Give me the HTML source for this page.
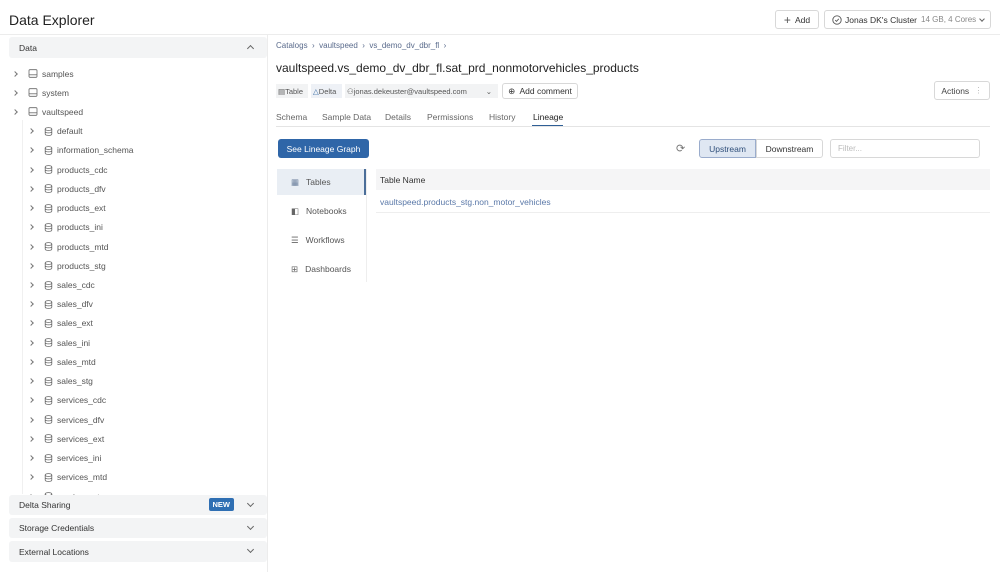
<!DOCTYPE html>
<html><head><meta charset="utf-8"><style>
*{box-sizing:border-box;margin:0;padding:0}
body{width:1000px;height:572px;overflow:hidden;background:#fff;font-family:"Liberation Sans",sans-serif;color:#333;font-size:8.5px;position:relative}
.abs{position:absolute}
.btn{position:absolute;border:1px solid #d8d8d8;border-radius:3px;background:#fff;font-size:8.5px;color:#333;display:flex;align-items:center;justify-content:center}
.row{position:absolute;height:19px;display:flex;align-items:center;font-size:8.5px;color:#555}
.chev{width:4px;height:4px;border-right:1px solid #777;border-bottom:1px solid #777;transform:rotate(-45deg);display:inline-block}
.sec{position:absolute;left:9px;width:258px;background:#f3f4f5;border-radius:3px;font-size:8.5px;color:#333;padding-left:10px;display:flex;align-items:center}
.dn{position:absolute;right:14px;width:5px;height:5px;border-right:1px solid #666;border-bottom:1px solid #666;transform:rotate(45deg)}
.tab{position:absolute;top:112px;font-size:8.5px;color:#666}
.side{position:absolute;left:277px;width:89px;height:26px;display:flex;align-items:center;padding-left:14px;font-size:8.5px;color:#555}
</style></head><body>
<div class="abs" style="left:9px;top:12px;font-size:14px;color:#222">Data Explorer</div>
<div class="abs" style="left:0;top:34px;width:1000px;border-top:1px solid #ececec"></div>
<div class="btn" style="left:775px;top:10px;width:44px;height:19px"><span style="font-size:12px;margin-right:4px;color:#555">+</span>Add</div>
<div class="btn" style="left:824px;top:10px;width:167px;height:19px;justify-content:flex-start;padding-left:7px"><svg width="10" height="10" viewBox="0 0 10 10"><circle cx="5" cy="5" r="4.2" fill="none" stroke="#555" stroke-width="0.9"/><path d="M3.2 5.1l1.3 1.3 2.3-2.6" fill="none" stroke="#555" stroke-width="0.9"/></svg><span style="margin-left:3px">Jonas DK's Cluster</span><span style="color:#888;margin-left:4px;font-size:8px">14 GB, 4 Cores</span><span class="dn" style="right:6px;top:6px;width:4px;height:4px"></span></div>

<div class="abs" style="left:267px;top:35px;height:537px;border-left:1px solid #ececec"></div>
<div class="sec" style="top:37px;height:21px">Data<span class="dn" style="transform:rotate(-135deg);top:9px"></span></div>
<div class="abs" style="left:22px;top:120px;height:374px;border-left:1px solid #f0f0f0"></div>
<div id="tree"></div>
<div class="sec" style="top:495px;height:20px">Delta Sharing<span class="abs" style="right:33px;top:3px;background:#2f6fb3;color:#fff;font-size:7.5px;font-weight:bold;padding:2px 4px;border-radius:2px">NEW</span><span class="dn" style="top:6px"></span></div>
<div class="sec" style="top:518px;height:20px">Storage Credentials<span class="dn" style="top:6px"></span></div>
<div class="sec" style="top:541px;height:21px">External Locations<span class="dn" style="top:6px"></span></div>

<div class="abs" style="left:276px;top:41px;font-size:8px;color:#5a6b8c">Catalogs &nbsp;›&nbsp; vaultspeed &nbsp;›&nbsp; vs_demo_dv_dbr_fl &nbsp;›</div>
<div class="abs" style="left:276px;top:61px;font-size:12px;color:#222">vaultspeed.vs_demo_dv_dbr_fl.sat_prd_nonmotorvehicles_products</div>
<div class="abs" style="left:276px;top:84px;height:14px;width:32px;background:#f2f3f4;font-size:7.5px;color:#555;padding:3px 2px">▤Table</div>
<div class="abs" style="left:311px;top:84px;height:14px;width:31px;background:#eef1f6;font-size:7.5px;color:#555;padding:3px 2px"><span style="color:#3a6ea5">△</span>Delta</div>
<div class="abs" style="left:345px;top:84px;height:14px;width:153px;background:#f2f3f4;font-size:7.5px;color:#555;padding:3px 2px">⚇jonas.dekeuster@vaultspeed.com<span style="position:absolute;right:6px">⌄</span></div>
<div class="btn" style="left:502px;top:83px;width:76px;height:16px">⊕&nbsp; Add comment</div>
<div class="btn" style="left:934px;top:81px;width:56px;height:19px;color:#444">Actions <span style="color:#bbb;margin-left:5px">⋮</span></div>

<div class="tab" style="left:276px">Schema</div>
<div class="tab" style="left:322px">Sample Data</div>
<div class="tab" style="left:385px">Details</div>
<div class="tab" style="left:427px">Permissions</div>
<div class="tab" style="left:489px">History</div>
<div class="tab" style="left:533px;color:#222">Lineage</div>
<div class="abs" style="left:532px;top:125px;width:31px;border-top:1.5px solid #2f5f96"></div>
<div class="abs" style="left:276px;top:126px;width:714px;border-top:1px solid #e4e4e4"></div>

<div class="abs" style="left:278px;top:139px;width:91px;height:19px;background:#2f66a8;border-radius:3px;color:#fff;font-size:8.5px;display:flex;align-items:center;justify-content:center">See Lineage Graph</div>
<div class="abs" style="left:676px;top:142px;font-size:11px;color:#777">⟳</div>
<div class="btn" style="left:699px;top:139px;width:57px;height:19px;background:#dfe7f2;border-color:#9aaccc;border-radius:3px 0 0 3px;color:#2f4f7a">Upstream</div>
<div class="btn" style="left:756px;top:139px;width:67px;height:19px;border-radius:0 3px 3px 0">Downstream</div>
<div class="btn" style="left:830px;top:139px;width:150px;height:19px;justify-content:flex-start;padding-left:7px;color:#bbb;font-size:8px">Filter...</div>

<div class="side" style="top:169px;background:#e9eef4;border-right:2px solid #4b6e99"><span style="color:#6a7f9c;margin-right:7px">▦</span>Tables</div>
<div class="side" style="top:198px"><span style="color:#666;margin-right:7px">◧</span>Notebooks</div>
<div class="side" style="top:227px"><span style="color:#666;margin-right:7px">☰</span>Workflows</div>
<div class="side" style="top:256px"><span style="color:#666;margin-right:7px">⊞</span>Dashboards</div>
<div class="abs" style="left:366px;top:169px;height:113px;border-left:1px solid #eee"></div>
<div class="abs" style="left:376px;top:169px;width:614px;height:21px;background:#f5f5f6;font-size:8.5px;color:#333;padding:6px 4px">Table Name</div>
<div class="abs" style="left:380px;top:197px;font-size:8.5px;color:#5a78a8">vaultspeed.products_stg.non_motor_vehicles</div>
<div class="abs" style="left:376px;top:212px;width:614px;border-top:1px solid #eee"></div>

<script>
var items=[["samples",0],["system",0],["vaultspeed",0],["default",1],["information_schema",1],["products_cdc",1],["products_dfv",1],["products_ext",1],["products_ini",1],["products_mtd",1],["products_stg",1],["sales_cdc",1],["sales_dfv",1],["sales_ext",1],["sales_ini",1],["sales_mtd",1],["sales_stg",1],["services_cdc",1],["services_dfv",1],["services_ext",1],["services_ini",1],["services_mtd",1],["services_stg",1]];
var h="";items.forEach(function(it,i){var y=64+i*19.23;var x=it[1]?29:13;
var ic=it[1]?'<svg width="9" height="9" viewBox="0 0 9 9" style="margin-right:4px"><ellipse cx="4.5" cy="2" rx="3.3" ry="1.4" fill="none" stroke="#666" stroke-width=".8"/><path d="M1.2 2v5c0 .8 1.5 1.4 3.3 1.4s3.3-.6 3.3-1.4V2M1.2 4.5c0 .8 1.5 1.4 3.3 1.4s3.3-.6 3.3-1.4" fill="none" stroke="#666" stroke-width=".8"/></svg>':'<svg width="10" height="9" viewBox="0 0 10 9" style="margin-right:4px"><rect x="1" y=".7" width="8" height="7.6" rx="1" fill="none" stroke="#666" stroke-width=".8"/><path d="M1 5.8h8" stroke="#666" stroke-width=".8"/></svg>';
h+='<div class="row" style="left:'+x+'px;top:'+y+'px"><span class="chev" style="margin-right:11px"></span>'+ic+it[0]+'</div>';});
document.getElementById("tree").innerHTML='<div style="position:absolute;left:0;top:0;width:267px;height:495px;overflow:hidden">'+h+'</div>';
</script>
</body></html>
